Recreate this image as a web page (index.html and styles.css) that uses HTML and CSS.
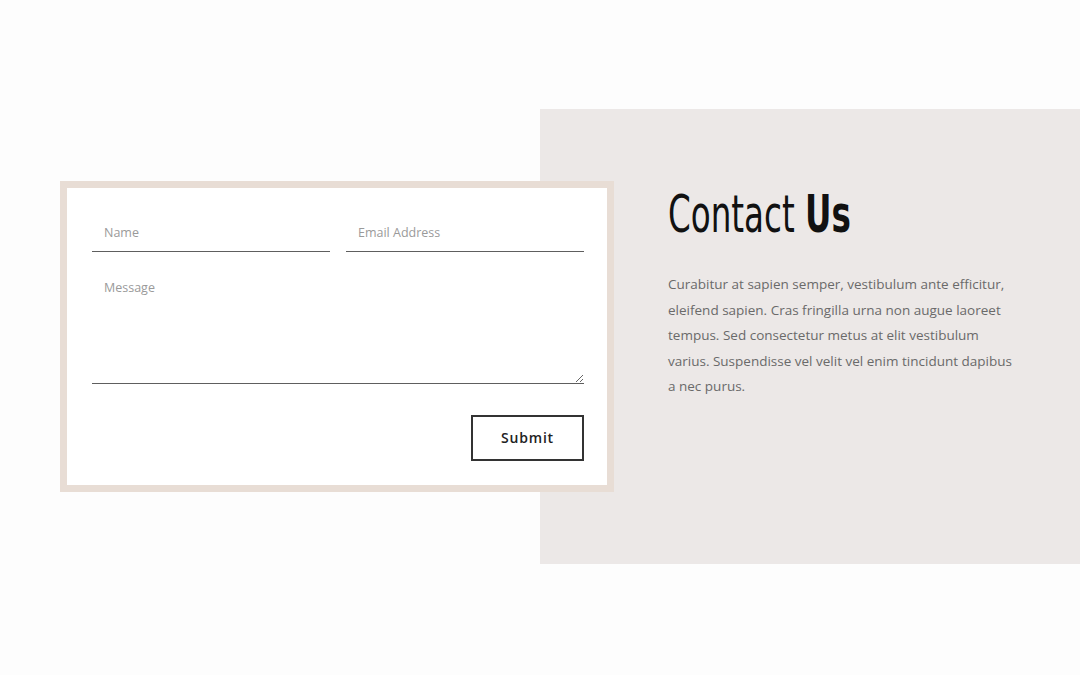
FILE: index.html
```html
<!DOCTYPE html>
<html lang="en">
<head>
<meta charset="utf-8">
<title>Contact Us</title>
<link rel="stylesheet" href="styles.css">
</head>
<body>
<section class="contact">
  <form class="card">
    <div class="row">
      <input class="field" type="text" placeholder="Name">
      <input class="field" type="email" placeholder="Email Address">
    </div>
    <textarea class="field message" placeholder="Message"></textarea>
    <div class="actions">
      <button class="submit" type="button">Submit</button>
    </div>
  </form>
  <div class="panel">
    <h1 class="title">Contact <b>Us</b></h1>
    <p class="text">Curabitur at sapien semper, vestibulum ante efficitur, eleifend sapien. Cras fringilla urna non augue laoreet tempus. Sed consectetur metus at elit vestibulum varius. Suspendisse vel velit vel enim tincidunt dapibus a nec purus.</p>
  </div>
</section>
</body>
</html>
```
FILE: styles.css
```css
html, body {
  margin: 0;
  background: #fdfdfd;
}
body {
  font-family: "Open Sans", "Liberation Sans", sans-serif;
  height: 675px;
  overflow: hidden;
}
.contact {
  display: grid;
  grid-template-columns: 60px 480px 74px 1fr;
  grid-template-rows: 72px 311px 72px;
  padding-top: 109px;
}
.panel {
  grid-column: 3 / 5;
  grid-row: 1 / 4;
  background: #ece8e7;
  padding: 78px 0 0 128px;
  box-sizing: border-box;
}
.card {
  grid-column: 2 / 4;
  grid-row: 2 / 3;
  z-index: 1;
  background: #fff;
  border: 7px solid #e8ddd5;
  padding: 24px 23px 24px 25px;
  display: flex;
  flex-direction: column;
}
.row {
  display: grid;
  grid-template-columns: 1fr 1fr;
  gap: 16px;
}
.field {
  font-family: "Open Sans", sans-serif;
  font-size: 12.5px;
  color: #555;
  border: none;
  border-bottom: 1px solid #5e5e5e;
  background: transparent;
  padding: 1px 12px 0;
  height: 40px;
  box-sizing: border-box;
  outline: none;
  width: 100%;
  margin: 0;
}
.field::placeholder {
  color: #9a9a9a;
}
.message {
  margin-top: 14px;
  height: 118px;
  padding: 13px 12px 11px;
  resize: vertical;
  display: block;
}
.actions {
  display: flex;
  justify-content: flex-end;
  margin-top: 31px;
}
.submit {
  width: 113px;
  height: 46px;
  background: #fff;
  border: 2px solid #333;
  font-family: "Open Sans", sans-serif;
  font-weight: 600;
  font-size: 14px;
  letter-spacing: 0.8px;
  color: #222;
  padding: 0 0 2px;
  cursor: pointer;
}
.title {
  margin: 0;
  font-family: "Liberation Sans Narrow", "DejaVu Sans Condensed", sans-serif;
  font-weight: 400;
  font-size: 51px;
  line-height: 56px;
  color: #111;
  transform-origin: left center;
  transform: scaleX(0.71);
  white-space: nowrap;
}
.title b {
  font-weight: 700;
}
.text {
  margin: 29px 0 0;
  width: 350px;
  font-size: 13.5px;
  line-height: 25.6px;
  color: #6a6a6a;
}
```
